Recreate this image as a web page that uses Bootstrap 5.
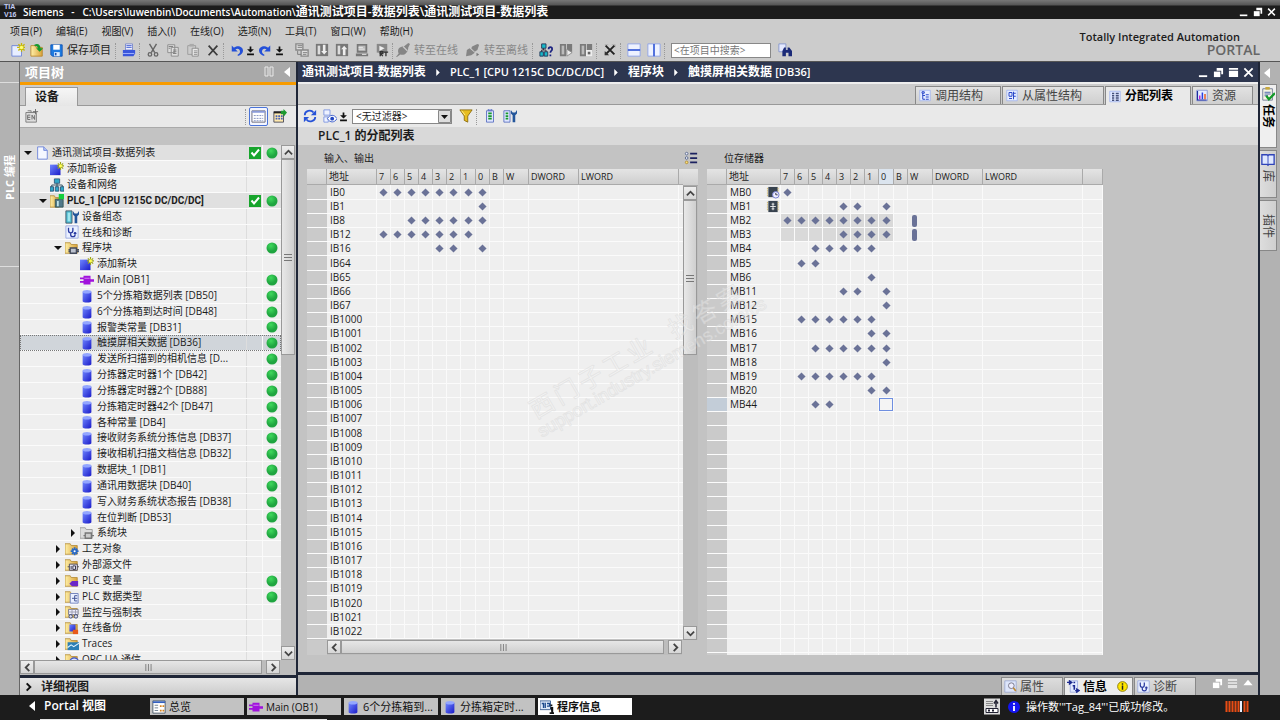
<!DOCTYPE html>
<html lang="zh-CN">
<head>
<meta charset="utf-8">
<meta name="viewport" content="width=device-width, initial-scale=1">
<title>Siemens - 通讯测试项目-数据列表</title>
<link href="https://cdn.jsdelivr.net/npm/bootstrap@5.3.0/dist/css/bootstrap.min.css" rel="stylesheet">
<style>
:root{--ink:#1c1c1c;--chrome:#ccc;--mid:#c3c3c3;--strip:#b2b2b2;--navy:#2d364f;--bit:#6a7297}
body{font:10px/14px "Open Sans","Noto Sans CJK SC",sans-serif;color:var(--ink);background:var(--mid);overflow:hidden}
button,input,select{font:inherit;color:inherit;border:0;background:none;padding:0;margin:0}
button{display:inline-flex;align-items:center;white-space:nowrap}
a{color:inherit;text-decoration:none}
svg{display:block;flex:none}
.ic{width:14px;height:14px}
.t10{font-size:10px}.t11{font-size:11px}.t12{font-size:12px}.t13{font-size:13px}
.title-bar{height:19px;background:linear-gradient(#777 0,#555 5px,#1c1c1c 6px);color:#fff;padding:0 4px}
.title-text{white-space:pre}
.logo{font:700 7px/8px "Liberation Sans",sans-serif;color:#c3cdf4;width:19px}
.app-head{height:43px;background:var(--chrome);border-bottom:1px solid #555}
.menu-bar{height:21px;padding:5px 10px 0;gap:14px}
.menu-bar a{white-space:nowrap}
.tool-bar{height:20px;padding-left:8px}
.tb{width:20px;height:18px;justify-content:center}
.tb.slim{width:9px}
.tb.first{width:19px}
.sep{width:4px;height:16px;border-left:1px dotted #999;margin-top:1px}
.off{color:#888}
.search-box{width:100px;height:15px;background:#fff;border:1px solid #888;padding:0 2px;margin-left:3px}
.search-box::placeholder{color:#777;opacity:1}
.brand{right:20px;top:30px;text-align:right;line-height:13px}
.brand .portal{font-size:14px;color:#666}
.brand .name-line{padding-right:20px}
.side-strip{width:20px;background:var(--strip)}
.vtext{writing-mode:vertical-rl;text-orientation:sideways}
.left-strip{border-right:1px solid #666}
.left-strip .cap{height:21px;border-bottom:1px solid #ddd}
.left-strip .mid{height:184px;border-bottom:1px solid #ddd;color:#fff}
.left-strip .mid span{transform:rotate(180deg);margin-bottom:66px}
.tree-pane{width:276px;background:var(--mid)}
.pane-title{height:20px;background:#a9a9a9;color:#fff;padding:0 5px}
.orange{height:3px;background:#f79b00}
.dev-tabs{height:21px;background:var(--chrome);border-bottom:1px solid #999;padding:2px 5px 0}
.dev-tabs button{height:19px;width:53px;background:linear-gradient(#f6f6f6,#e6e6e6);border:1px solid #999;border-bottom:0;margin-bottom:-1px;padding-left:9px}
.pane-tools{height:23px;background:#e9e9e9;border-bottom:1px solid #aaa;padding:0 9px 0 5px}
.list-btn{border:1px solid #4a73d8;background:#f4f6ff;border-radius:2px;padding:1px;margin-right:5px}
.gap-band{height:17px}
.tree-row{height:16px;border-bottom:1px solid #fbfbfb;background:#efefef}
.tree-row:nth-child(6n){height:15px}
.tree-row.head{background:#e0e0e0}
.tree-row.sel{background:#d0d5da;outline:1px dotted #777;outline-offset:-1px}
.tree-row .tog{width:15px;justify-content:center}
.tree-row .label-text{margin-left:3px}
.tree-row .strong-text{font-family:Roboto,"Noto Sans CJK SC",sans-serif;font-weight:700}
.tree-row .name{width:227px;border-right:1px solid #ddd;overflow:hidden;white-space:nowrap;line-height:15px}
.tree-row .chk{width:16px;border-right:1px solid #fafafa}
.tree-row .dot{width:17px}
.lv-1{padding-left:15px}.lv-2{padding-left:30px}.lv-3{padding-left:45px}
.vs{width:15px;background:#bdbdbd}
.vs button,.hs button{width:14px;height:14px;background:linear-gradient(#eee,#d6d6d6);border:1px solid #999;justify-content:center;color:#444;flex:none}
.vs .top-cell{height:17px;background:linear-gradient(#e4e4e4,#cfcfcf);border-bottom:1px solid #aaa}
.thumb-v{width:14px;background:linear-gradient(90deg,#e8e8e8,#cfcfcf);border:1px solid #999}
.hs{height:15px;background:#bdbdbd}
.thumb-h{height:14px;background:linear-gradient(#e6e6e6,#cfcfcf);border:1px solid #999}
.detail{height:20px;background:linear-gradient(#e6e6e6,#ccc);border-top:3px solid #1f2637}
.edge{width:2px;background:#1f2637}
.doc-title{height:20px;background:var(--navy);color:#fff;padding:0 4px;gap:8px;white-space:nowrap}
.doc-tabs{height:23px;background:var(--chrome);border-top:2px solid #eee;border-bottom:1px solid #999;padding-right:4px}
.doc-tabs button{height:18px;width:86px;border:1px solid #888;border-bottom:0;background:linear-gradient(#e2e2e2,#cfcfcf);padding-left:3px;gap:4px;color:#444;margin-right:1px}
.doc-tabs button.wide{width:102px}
.doc-tabs button.short{width:61px}
.doc-tabs button.on{background:#e9e9e9;color:#000;height:19px;margin-bottom:-1px}
.doc-tools{height:22px;background:#e9e9e9;padding-left:2px}
.filter-box{width:100px;height:15px}
.filter-box select{appearance:none;background:#fff;border:1px solid #888;padding-left:3px;line-height:13px}
.filter-box svg{right:1px;top:1px;pointer-events:none}
.doc-sub{height:18px;background:#d9d9d9;padding-left:20px}
.area-head{height:24px;padding:1px 0 0 17px}
.bits{table-layout:fixed;border-collapse:separate;border-spacing:0;line-height:13px}
.bits th{height:16px;font-size:9px;font-weight:400;background:linear-gradient(#e4e4e4,#cfcfcf);border-right:1px solid #aaa;border-bottom:1px solid #aaa;padding:0 2px;overflow:hidden}
.bits th.ad{font-size:10px}
.bits th.cur{background:#dbe4ee}
.bits td{height:14px;padding:0;background:#efefef;border-right:1px solid #fafafa;border-bottom:1px solid #fbfbfb;overflow:hidden;line-height:13px}
.bits tbody tr:nth-child(6n) td{height:15px}
.bits tbody tr:first-child td{height:15px}
.bits td.gut{background:#cacaca;border-right:0}
.bits td.gut.cur{background:#c3cdd8}
.bits td.ad{padding-left:3px;border-right-color:#fbfbfb}
.bits td.use{background:#d9d9d9}
.bits td.pick{box-shadow:inset 0 0 0 1px #6f8fe0;background:#f4f4f4}
.bits td.bitc svg{margin:auto}
.bits .pill{width:5px;height:12px;background:var(--bit);margin-left:4px;border-radius:2px}
.c20{width:20px}.c14{width:14px}.c15{width:15px}.c25{width:25px}.c50{width:50px}.c54{width:54px}.c100{width:100px}.c5{width:5px}
.grid-l{width:391px;margin-left:9px}
.grid-r{width:396px;margin-left:9px}
.view-l{width:377px;height:471px}
.body-r{width:396px;height:486px}
.insp{height:23px;background:var(--strip);border-top:3px solid #1f2637}
.insp button.tabx{height:18px;width:62px;border:1px solid #888;border-bottom:0;background:linear-gradient(#ddd,#c9c9c9);color:#444;gap:3px;padding-left:2px;margin-top:2px}
.insp button.tabx.on{background:#ececec;color:#000;width:69px;margin:2px 1px 0}
.right-strip{padding-top:22px;position:relative}
.right-strip .vtab{width:17px;border:1px solid #888;border-left:0;background:linear-gradient(90deg,#ddd,#cfcfcf);flex-direction:column;gap:3px;padding-top:2px;color:#444;margin-bottom:2px}
.right-strip .vtab.on{background:#efefef;color:#000}
.right-strip .col-arrow{height:22px;top:0;left:3px}
.foot{height:25px;background:#1c1c1c;color:#fff}
.portal-link{padding-left:28px;width:150px}
.task{width:94px;height:17px;background:#c2c2c2;color:#111;padding-left:2px;gap:3px;margin-right:3px;margin-top:3px}
.task.on{background:#fff}
.status{margin-top:3px}
.status .info-mark{margin:0 6px 0 8px}
.activity{margin-right:31px}
.msg{width:199px}
.foot-line{height:1px;width:287px;margin-left:40px;background:#e4e4e4}
.wm{left:515px;top:333px;transform:rotate(-30deg);pointer-events:none;z-index:3;color:rgba(255,255,255,.35);-webkit-text-stroke:1px rgba(208,208,208,.4);white-space:nowrap}
.wm .zh{font:24px/26px "Noto Sans CJK SC",sans-serif;gap:4px;padding-left:4px}
.wm .gap-before{margin-left:20px}
.wm .url{font:18px/20px "Liberation Sans",sans-serif}
</style>
</head>
<body class="d-flex flex-column vh-100">

<svg width="0" height="0" class="position-absolute" aria-hidden="true">
<defs>
<linearGradient id="gb" x1="0" x2="1" y1="0" y2="1"><stop offset="0" stop-color="#6f86ff"/><stop offset="1" stop-color="#1a1ac8"/></linearGradient>
<linearGradient id="gy" x1="0" x2="1"><stop offset="0" stop-color="#fff0a8"/><stop offset="1" stop-color="#d9a23a"/></linearGradient>
<radialGradient id="gg" cx=".4" cy=".3"><stop offset="0" stop-color="#3fd95c"/><stop offset="1" stop-color="#1fa540"/></radialGradient>
<symbol id="page" viewBox="0 0 16 16"><path d="M3 1h7l4 4v10H3z" fill="#f4f7ff" stroke="#6a82d8"/><path d="M10 1v4h4" fill="#b9c7f5" stroke="#6a82d8"/></symbol>
<symbol id="newprj" viewBox="0 0 16 16"><path d="M1 3h8l3 3v9H1z" fill="#e8eeff" stroke="#6a82d8"/><path d="M12 0v10M7 5h10M8.500 1.500l7 7M15.500 1.500l-7 7" stroke="#c8b800" stroke-width="1.500"/><circle cx="12" cy="5" r="2" fill="#ffff70"/></symbol>
<symbol id="open" viewBox="0 0 16 16"><path d="M1 3h5l1 2h7v10H1z" fill="url(#gy)" stroke="#b8862a"/><path d="M5 2c4-2 7 0 7 4h3l-4 4-4-4h2c0-2-1-3-4-3z" fill="#159a2c"/></symbol>
<symbol id="save" viewBox="0 0 16 16"><path d="M1 1h14v14H3l-2-2z" fill="#1e7be0" stroke="#0a4db0"/><path d="M4 1h8v6H4z" fill="#fff"/><path d="M5 10h7v5H5z" fill="#d9ecff"/><path d="M6 11h2v3H6z" fill="#1e4fb0"/></symbol>
<symbol id="print" viewBox="0 0 16 16"><path d="M4 1h8v7H4z" fill="#eef" stroke="#7787c8"/><path d="M5 3h6M5 5h6" stroke="#3355cc"/><path d="M1 8h14v4l-2 3H1z" fill="#3a57dc"/><path d="M1 12h13" stroke="#a9b8ff"/></symbol>
<symbol id="cut" viewBox="0 0 16 16"><path d="M4 1l6 10M12 1L6 11" stroke="#666" stroke-width="1.600"/><circle cx="4.500" cy="13" r="2" fill="none" stroke="#666" stroke-width="1.500"/><circle cx="11.500" cy="13" r="2" fill="none" stroke="#666" stroke-width="1.500"/></symbol>
<symbol id="copy" viewBox="0 0 16 16"><path d="M2 2h8v9H2zM6 5h8v10H6z" fill="#ddd" stroke="#888"/><path d="M8 8h4M8 10h4M8 12h4M3 4h5M3 6h2" stroke="#777"/></symbol>
<symbol id="paste" viewBox="0 0 16 16"><path d="M2 3h9v10H2z" fill="#ccc" stroke="#999"/><path d="M4 1h5v3H4z" fill="#aaa"/><path d="M7 6h7v9H7z" fill="#e8e8e8" stroke="#888"/><path d="M9 9h4M9 11h4M9 13h4" stroke="#888"/></symbol>
<symbol id="del" viewBox="0 0 16 16"><path d="M3 3l10 11M13 3L3 14" stroke="#3c3c3c" stroke-width="2"/></symbol>
<symbol id="undo" viewBox="0 0 16 16"><path d="M1 2v8h8L6 7c3-2 6 0 6 3 0 2-1 3-3 4v2c4-1 7-4 7-7 0-6-8-8-12-4z" fill="#2450d8"/></symbol>
<symbol id="redo" viewBox="0 0 16 16"><path d="M15 2v8H7l3-3C7 5 4 7 4 10c0 2 1 3 3 4v2c-4-1-7-4-7-7 0-6 8-8 12-4z" fill="#2450d8"/></symbol>
<symbol id="drop" viewBox="0 0 8 14"><path d="M3 3h2v3h3L4 10 0 6h3zM0 11h8v2H0z" fill="#111"/></symbol>
<symbol id="gcomp" viewBox="0 0 16 16"><path d="M1 1h8v7H1zM7 8h8v7H7z" fill="#ddd" stroke="#888" stroke-width="1.500"/><path d="M3 3h5M3 5h5M9 11h5M9 13h4M3 9v4h4" stroke="#777" fill="none"/></symbol>
<symbol id="gdown" viewBox="0 0 16 16"><path d="M1 1h14v14H1z" fill="#777"/><path d="M3 3h3v10H3z" fill="#ddd"/><path d="M9 2h3v7h2l-3.500 4L7 9h2z" fill="#eee"/></symbol>
<symbol id="gup" viewBox="0 0 16 16"><path d="M1 1h14v14H1z" fill="#777"/><path d="M3 3h3v10H3z" fill="#ddd"/><path d="M9 14h3V7h2l-3.500-4L7 7h2z" fill="#eee"/></symbol>
<symbol id="gsim" viewBox="0 0 16 16"><path d="M2 1h12v10H2zM1 12h14v3H1z" fill="#777"/><path d="M4 3h8v6H4z" fill="#bbb"/><path d="M4 5h5M4 7h7M8 13h5" stroke="#eee"/></symbol>
<symbol id="grt" viewBox="0 0 16 16"><path d="M2 1h12v10H2z" fill="#888"/><path d="M5 3l6 3-6 3z" fill="#eee"/><path d="M6 15v-5h3v2H6l3 3M10 10.500h5M12.500 10v5" stroke="#333" fill="none" stroke-width="1.500"/></symbol>
<symbol id="plug" viewBox="0 0 16 16"><path d="M0 16l3-4c-2-5 1-8 6-8l5-4 2 1-2 4c0 6-5 10-9 8l-4 3z" fill="#858585"/><path d="M8 4l5 5" stroke="#ccc" stroke-width="1.500"/></symbol>
<symbol id="unplug" viewBox="0 0 16 16"><path d="M7 4l6-3 2 1-2 6-3 2-4-4zM0 15l1-7 3-2 6 5-4 3z" fill="#858585"/><path d="M12 11v4l3-2z" fill="#777"/></symbol>
<symbol id="diagq" viewBox="0 0 16 16"><path d="M3 1h5v5H3zM1 10h4v5H1zM6 10h4v5H6z" fill="#18b8c8" stroke="#235"/><path d="M5 6v2M3 10V8h5v2" stroke="#223" fill="none"/><path d="M11 7c0-3 4-3 4 0 0 2-2 2-2 4M13 13v2" stroke="#1c2380" stroke-width="2" fill="none"/></symbol>
<symbol id="gstart" viewBox="0 0 16 16"><path d="M1 1h7v14H1zM9 1h6v9H9z" fill="#7a7a7a"/><path d="M3 3h3v10H3z" fill="#bbb"/><path d="M9 7l6 4-6 4z" fill="#eee" stroke="#888"/></symbol>
<symbol id="gstop" viewBox="0 0 16 16"><path d="M1 1h7v14H1zM9 1h6v9H9z" fill="#7a7a7a"/><path d="M3 3h3v10H3z" fill="#bbb"/><path d="M8 8h7v7H8z" fill="#eee"/><path d="M10 10h3v3h-3z" fill="#666"/></symbol>
<symbol id="xref" viewBox="0 0 16 16"><path d="M2 2h4M10 2h4v3M2 14v-3" stroke="#aaa" fill="none"/><path d="M3 3l10 10M13 3L3 13" stroke="#222" stroke-width="2.200"/><path d="M2 9v5h5z" fill="#333"/></symbol>
<symbol id="splith" viewBox="0 0 16 16"><path d="M1 1h14v14H1z" fill="#eef2ff" stroke="#8ba0e8"/><path d="M1 8h14" stroke="#3d5fd8" stroke-width="2"/></symbol>
<symbol id="splitv" viewBox="0 0 16 16"><path d="M1 1h14v14H1z" fill="#eef2ff" stroke="#8ba0e8"/><path d="M8 1v14" stroke="#3d5fd8" stroke-width="2"/></symbol>
<symbol id="find" viewBox="0 0 16 16"><path d="M1 1h8v9H1z" fill="#e4e9ff" stroke="#8492cc"/><path d="M5 15V9l2-4h2v3h2V5h2l3 4v6h-4v-4H9v4z" fill="#1b2a78"/></symbol>
<symbol id="addblk" viewBox="0 0 16 16"><path d="M0 3h12v12H0z" fill="url(#gb)"/><path d="M12 0v9M8 4.500h8M9 1.500l6 6M15 1.500l-6 6" stroke="#9da51a" stroke-width="1.300"/><circle cx="12" cy="4.500" r="1.800" fill="#ffff55"/></symbol>
<symbol id="net" viewBox="0 0 16 16"><path d="M5 1h6v5H5zM0 10h4v5H0zM6 10h4v5H6zM12 10h4v5h-4z" fill="#31a7c8" stroke="#2a5578"/><path d="M8 6v4M2 10V8h12v2" stroke="#245" fill="none"/></symbol>
<symbol id="plc" viewBox="0 0 16 16"><path d="M0 2h5l1 2h4v11H0z" fill="url(#gy)" stroke="#b8913f"/><path d="M6 6h9v9H6z" fill="#50788a" stroke="#355"/><path d="M8 8h2v6H8z" fill="#bfe3e8"/><path d="M10 0h6v6h-6z" fill="#13cf3c"/></symbol>
<symbol id="devcfg" viewBox="0 0 16 16"><path d="M1 1h7v14H1z" fill="#4bb9d0" stroke="#456"/><path d="M3 3h3v10H3z" fill="#9fe6ee"/><path d="M9 1v4l2 2v8h3V7l2-2V1l-2 3h-3z" fill="#24569a"/></symbol>
<symbol id="diag" viewBox="0 0 16 16"><path d="M1 1h14v14H1z" fill="#eaf0ff" stroke="#98a8e0"/><path d="M4 3v3c0 4 5 4 5 0V3M6.500 9v2c0 3 5 3 5 0" stroke="#2a3aa0" stroke-width="1.500" fill="none"/><circle cx="11.500" cy="9.500" r="1.500" fill="#2a3aa0"/></symbol>
<symbol id="fold" viewBox="0 0 16 16"><path d="M0 2h6l1 2h7v10H0z" fill="url(#gy)" stroke="#b8913f"/></symbol>
<symbol id="fblk" viewBox="0 0 16 16"><use href="#fold"/><path d="M6 8h7v6H6zM4 10h2M4 12h2M13 10h3M13 12h3" fill="#bcc2cf" stroke="#444b5c" stroke-width="1.500"/></symbol>
<symbol id="fsys" viewBox="0 0 16 16"><path d="M0 2h6l1 2h7v10H0z" fill="#ddd" stroke="#999"/><path d="M6 8h7v6H6zM4 11h2M13 11h3" fill="#ccc" stroke="#777" stroke-width="1.500"/></symbol>
<symbol id="ftech" viewBox="0 0 16 16"><use href="#fold"/><path d="M11 6v9M6.500 10.500h9M8 7.500l6 6M14 7.500l-6 6" stroke="#2668c8" stroke-width="2"/><circle cx="11" cy="10.500" r="1.200" fill="#fff"/></symbol>
<symbol id="fext" viewBox="0 0 16 16"><use href="#fold"/><path d="M5 7h9v7H5zM3 10h2M14 10h2" fill="#eef" stroke="#445"/><path d="M7 9v4M9 9h3v4H9z" stroke="#223" fill="none"/></symbol>
<symbol id="fvar" viewBox="0 0 16 16"><use href="#fold"/><path d="M5 11l3-3h7v6H8z" fill="#6a26c8"/></symbol>
<symbol id="ftype" viewBox="0 0 16 16"><use href="#fold"/><path d="M6 4h9v11H6z" fill="#eaf0ff" stroke="#6b7fc0"/><path d="M8 9.500h3M14 6.500h-3v6h3M11 9.500h3" stroke="#34468c" fill="none"/></symbol>
<symbol id="fwatch" viewBox="0 0 16 16"><use href="#fold"/><path d="M4 5h11v6H4z" fill="#eef" stroke="#778"/><path d="M4 8h11M8 5v6M12 5v6" stroke="#99a"/><circle cx="6.500" cy="13" r="2" fill="#dde" stroke="#347"/><circle cx="12.500" cy="13" r="2" fill="#dde" stroke="#347"/></symbol>
<symbol id="fback" viewBox="0 0 16 16"><use href="#fold"/><path d="M5 4h7v8H5z" fill="url(#gb)"/><path d="M9 10h6v5H9z" fill="#e85a1c"/></symbol>
<symbol id="ftrace" viewBox="0 0 16 16"><use href="#fold"/><path d="M3 6h13v9H3z" fill="#2c7fb5"/><path d="M3 12l4-3 3 2 6-4" stroke="#dff4ff" fill="none" stroke-width="1.300"/></symbol>
<symbol id="fopc" viewBox="0 0 16 16"><use href="#fold"/><circle cx="10.500" cy="10.500" r="5" fill="#dce4ff" stroke="#3b55c8" stroke-width="1.500"/><path d="M8 11l2.500-3 2.500 3" stroke="#3b55c8" fill="none"/></symbol>
<symbol id="ob" viewBox="0 0 16 16"><path d="M4 3h8v10H4zM0 5h4v2H0zM0 9h4v2H0zM12 7h4v3h-4z" fill="#a012dc"/><path d="M5 6h6" stroke="#d68cf5"/></symbol>
<symbol id="db" viewBox="0 0 16 16"><path d="M3 3v11c0 2 10 2 10 0V3z" fill="url(#gb)"/><ellipse cx="8" cy="3" rx="5" ry="2" fill="#93a6ff"/></symbol>
<symbol id="ok" viewBox="0 0 12 12"><path d="M0 0h12v12H0z" fill="#17a52c"/><path d="M2.500 5.500l2.500 3 5-6" stroke="#fff" stroke-width="2" fill="none"/></symbol>
<symbol id="run" viewBox="0 0 12 12"><circle cx="6" cy="6" r="5.500" fill="url(#gg)"/></symbol>
<symbol id="tri-d" viewBox="0 0 8 8"><path d="M0 2h8L4 6z" fill="#111"/></symbol>
<symbol id="tri-r" viewBox="0 0 8 8"><path d="M2 0l4 4-4 4z" fill="#111"/></symbol>
<symbol id="tri-l" viewBox="0 0 8 10"><path d="M7 0v10L1 5z" fill="#fff"/></symbol>
<symbol id="tri-w" viewBox="0 0 8 8"><path d="M2 0l4 4-4 4z" fill="#fff"/></symbol>
<symbol id="up" viewBox="0 0 10 10"><path d="M1 7l4-4 4 4" stroke="#444" stroke-width="2" fill="none"/></symbol>
<symbol id="dn" viewBox="0 0 10 10"><path d="M1 3l4 4 4-4" stroke="#444" stroke-width="2" fill="none"/></symbol>
<symbol id="lf" viewBox="0 0 10 10"><path d="M7 1L3 5l4 4" stroke="#444" stroke-width="2" fill="none"/></symbol>
<symbol id="rt" viewBox="0 0 10 10"><path d="M3 1l4 4-4 4" stroke="#444" stroke-width="2" fill="none"/></symbol>
<symbol id="rt-b" viewBox="0 0 10 10"><path d="M3 1l4 4-4 4" stroke="#111" stroke-width="2.200" fill="none"/></symbol>
<symbol id="grip-v" viewBox="0 0 8 8"><path d="M0 1.500h8M0 4.500h8M0 7.500h8" stroke="#777"/></symbol>
<symbol id="grip-h" viewBox="0 0 8 8"><path d="M1.500 0v8M4.500 0v8M7.500 0v8" stroke="#777"/></symbol>
<symbol id="bit" viewBox="0 0 10 10"><path d="M5 .5L9.500 5 5 9.500.5 5z" fill="#6a7297"/></symbol>
<symbol id="clk" viewBox="0 0 14 14"><path d="M2 1h10v11H2z" fill="#38434f"/><path d="M1 2v10M12.500 2v10" stroke="#c3a23e" stroke-dasharray="1 1"/><circle cx="10" cy="9.500" r="3.500" fill="#eef" stroke="#7078d0"/><path d="M10 7.500v2h2" stroke="#334" fill="none"/></symbol>
<symbol id="sysb" viewBox="0 0 14 14"><path d="M2 1h10v12H2z" fill="#38434f"/><path d="M1 2v10M12.500 2v10" stroke="#c3a23e" stroke-dasharray="1 1"/><path d="M7 3v8M4 7h6M5.500 4.500h3M5.500 9.500h3" stroke="#eee"/></symbol>
<symbol id="refresh" viewBox="0 0 16 16"><path d="M2 7c0-5 7-7 10-3M14 9c0 5-7 7-10 3" stroke="#2753d8" stroke-width="2" fill="none"/><path d="M15 1v6H9zM1 15V9h6z" fill="#2753d8"/></symbol>
<symbol id="viewopt" viewBox="0 0 16 16"><path d="M1 1h7v6H1zM1 9h5v6H1z" fill="#eef2ff" stroke="#7c93e0"/><path d="M5 11c3-5 8-5 11 0-3 5-8 5-11 0z" fill="#fff" stroke="#2c50c8"/><circle cx="10.500" cy="11" r="2.200" fill="#1f45c0"/></symbol>
<symbol id="funnel" viewBox="0 0 16 16"><path d="M1 1h14l-5 7v7l-4-2V8z" fill="#e8bd1e" stroke="#8a6a10"/><path d="M3 2l4 5" stroke="#fff3a0"/></symbol>
<symbol id="bytes" viewBox="0 0 16 16"><path d="M4 2h8v13H4zM6 0h4v2H6z" fill="#dfe6ff" stroke="#5a6fc0"/><path d="M6 5h4M6 8h4M6 11h4" stroke="#189a2c" stroke-width="2"/></symbol>
<symbol id="bytew" viewBox="0 0 16 16"><path d="M1 2h7v13H1z" fill="#dfe6ff" stroke="#5a6fc0"/><path d="M3 5h3M3 8h3M3 11h3" stroke="#189a2c" stroke-width="2"/><path d="M9 1v4l2 2v8h3V7l2-2V1l-2 3h-3z" fill="#24569a"/></symbol>
<symbol id="struct" viewBox="0 0 16 16"><path d="M1 1h14v14H1z" fill="#e6edff" stroke="#9eb0ee"/><path d="M4 3h3v2H4zM5 5v8h3M5 8h3M9 7h4M9 10h4M9 13h4" stroke="#2745c8" stroke-width="1.300" fill="none"/></symbol>
<symbol id="depst" viewBox="0 0 16 16"><path d="M1 1h14v14H1z" fill="#e6edff" stroke="#9eb0ee"/><path d="M4 4h4v5H4zM10 3v10M4 12h4M10 5h3M10 9h3" stroke="#2745c8" stroke-width="1.300" fill="none"/></symbol>
<symbol id="alloc" viewBox="0 0 16 16"><path d="M1 1h14v14H1z" fill="#dfe7ff" stroke="#9eb0ee"/><path d="M4 4h3M9 4h4M4 7h3M9 7h4M4 10h3M9 10h4M4 13h3M9 13h4" stroke="#444f7a" stroke-width="2"/></symbol>
<symbol id="res" viewBox="0 0 16 16"><path d="M1 1h14v14H1z" fill="#e6edff" stroke="#7787c8"/><path d="M2 2v12h12" stroke="#1c2ca0" stroke-width="1.500" fill="none"/><path d="M5 13V8" stroke="#c026d0" stroke-width="2"/><path d="M8.500 13V4" stroke="#2840e0" stroke-width="2"/><path d="M12 13V6" stroke="#e86020" stroke-width="2"/></symbol>
<symbol id="wmin" viewBox="0 0 12 12"><path d="M1 9h9v2H1z" fill="#fff"/></symbol>
<symbol id="wres" viewBox="0 0 12 12"><path d="M4 1h7v7H9V4H4z" fill="#fff"/><path d="M1 5h7v6H1z" fill="#fff"/></symbol>
<symbol id="wmax" viewBox="0 0 12 12"><path d="M1 1h10v2H1zM1 4h10v7H1z" fill="#fff"/></symbol>
<symbol id="wlist" viewBox="0 0 12 12"><path d="M1 1h10v10H1z" fill="#e4e4e4"/><path d="M1 4h10M1 7h10" stroke="#a0a0a0"/></symbol>
<symbol id="wx" viewBox="0 0 12 12"><path d="M1.500 1.500l9 9M10.500 1.500l-9 9" stroke="#fff" stroke-width="2"/></symbol>
<symbol id="wtri" viewBox="0 0 12 12"><path d="M6 2l5 6H1z" fill="#fff"/></symbol>
<symbol id="cols" viewBox="0 0 12 12"><path d="M2 1h3v9H2zM7 1h3v9H7z" fill="none" stroke="#e8e8e8"/></symbol>
<symbol id="gprop" viewBox="0 0 16 16"><path d="M1 4h12v11H1zM3 2h4v2" fill="#ddd" stroke="#777"/><path d="M3 7h3M3 9.500h3M3 12h3M3 7v5M8 7v5M11 7v5M8 7l3 5M12 0v6M9 3h6" stroke="#666"/></symbol>
<symbol id="tbl" viewBox="0 0 16 16"><path d="M1 2h14v12H1z" fill="#fff" stroke="#667"/><path d="M1 3h14" stroke="#8b9bd8" stroke-width="2"/><path d="M3 7h10M3 10h10M3 12.500h10" stroke="#8190c0" stroke-dasharray="2 1"/></symbol>
<symbol id="tblgo" viewBox="0 0 16 16"><path d="M1 3h11v12H1z" fill="#ffe9ad" stroke="#445"/><path d="M1 4h11" stroke="#222" stroke-width="2"/><path d="M3 8h8M3 11h8" stroke="#4560b8" stroke-width="2" stroke-dasharray="2 1"/><path d="M9 2h3V0l4 4-4 5V6H9z" fill="#1d9a30"/></symbol>
<symbol id="lst" viewBox="0 0 16 16"><path d="M7 3h8M7 8h8M7 13h8" stroke="#1c2260" stroke-width="2"/><circle cx="3" cy="3" r="1.500" fill="#eef" stroke="#568"/><circle cx="3" cy="8" r="1.500" fill="#eef" stroke="#568"/><circle cx="3" cy="13" r="1.500" fill="#ffe27a" stroke="#a83"/></symbol>
<symbol id="task" viewBox="0 0 16 16"><path d="M2 2h11v13H2z" fill="#f6f6e4" stroke="#6a7590"/><path d="M5 0h5v3H5z" fill="#c8a83c"/><path d="M4 6h7M4 8h7M4 10h4" stroke="#3955a8"/><path d="M6 10l3 4 7-7" stroke="#149a28" stroke-width="2.500" fill="none"/></symbol>
<symbol id="book" viewBox="0 0 16 16"><path d="M1 2h6l1 1 1-1h6v11H9l-1 1-1-1H1z" fill="#dfe8ff" stroke="#2f43b8" stroke-width="1.500"/><path d="M8 3v10" stroke="#2f43b8"/></symbol>
<symbol id="insp-p" viewBox="0 0 16 16"><path d="M1 1h14v14H1z" fill="#dde5fa" stroke="#9aa8d0"/><circle cx="9" cy="7" r="3.500" fill="#eef" stroke="#667"/><path d="M11.500 9.500l3 4" stroke="#c08a30" stroke-width="2"/></symbol>
<symbol id="insp-i" viewBox="0 0 16 16"><path d="M4 1h9v14H4z" fill="#e2eaff" stroke="#98a8e0"/><path d="M0 3h4M3 1l3 2-3 2zM10 13h5M12 11l3 2-3 2z" stroke="#1c2a90" stroke-width="1.500" fill="#1c2a90"/><path d="M8 3h2M7 7h2v5" stroke="#1c2a90" stroke-width="2" fill="none"/></symbol>
<symbol id="warn" viewBox="0 0 12 12"><circle cx="6" cy="6" r="5.300" fill="#ffe600" stroke="#8a7a00"/><path d="M6 2.500v1.500M6 5v4.500" stroke="#222" stroke-width="1.600"/></symbol>
<symbol id="inf" viewBox="0 0 12 12"><circle cx="6" cy="6" r="6" fill="#1414f0"/><path d="M6 2v1.700M6 5v5" stroke="#fff" stroke-width="1.800"/></symbol>
<symbol id="over" viewBox="0 0 16 16"><path d="M1 1h14v14H1z" fill="#fff" stroke="#456"/><path d="M1 2.500h14" stroke="#3360c0" stroke-width="2"/><path d="M3 6h4M3 9h4M3 12h4" stroke="#678"/><path d="M9 6h2v2H9zM12 6h2v2h-2zM9 11h2v2H9zM12 11h2v2h-2z" fill="#d88420"/></symbol>
<symbol id="pinfo" viewBox="0 0 16 16"><path d="M0 1h12v10H0z" fill="#dce8f8" stroke="#35588c"/><path d="M2 4h2v5M6 3v6M8 4h3v3H8" stroke="#1c4a8c" stroke-width="1.500" fill="none"/><path d="M13 5v2M12 9h2v6M11 15h5" stroke="#111" stroke-width="2.200"/></symbol>
<symbol id="stat" viewBox="0 0 16 16"><path d="M0 0h16v16H0z" fill="#ddd"/><path d="M2 3h7M2 5h7M2 7h7" stroke="#888"/><path d="M2 10h12v4H2z" fill="#fff" stroke="#223"/><path d="M4 12h2M8 12h2" stroke="#223" stroke-width="2"/><path d="M12 9V4M10 5l2-3 2 3" stroke="#223" stroke-width="1.500" fill="none"/></symbol>
</defs>
</svg>

<header>
  <div class="title-bar d-flex align-items-end">
    <div class="logo"><div>TIA</div><div>V16</div></div>
    <span class="t12 fw-semibold title-text"><span class="t10">Siemens   -   C:\Users\luwenbin\Documents\Automation\</span>通讯测试项目-数据列表\通讯测试项目-数据列表</span>
    <div class="ms-auto d-flex align-self-center gap-1 mt-1">
      <button aria-label="最小化"><svg width="10" height="10"><use href="#wmin"/></svg></button>
      <button aria-label="还原"><svg width="10" height="10"><use href="#wres"/></svg></button>
      <button aria-label="关闭"><svg width="9" height="10"><use href="#wx"/></svg></button>
    </div>
  </div>
  <div class="app-head">
    <nav class="menu-bar d-flex" id="menu"></nav>
    <div class="tool-bar d-flex align-items-center" role="toolbar">
      <button class="tb first" aria-label="新建"><svg class="ic"><use href="#newprj"/></svg></button>
      <button class="tb first" aria-label="打开"><svg class="ic"><use href="#open"/></svg></button>
      <button class="t11 gap-1 ms-1"><svg width="13" height="13"><use href="#save"/></svg>保存项目</button>
      <i class="sep ms-1"></i>
      <button class="tb" aria-label="打印"><svg class="ic"><use href="#print"/></svg></button>
      <i class="sep"></i>
      <button class="tb" aria-label="剪切"><svg class="ic"><use href="#cut"/></svg></button>
      <button class="tb" aria-label="复制"><svg class="ic"><use href="#copy"/></svg></button>
      <button class="tb" aria-label="粘贴"><svg class="ic"><use href="#paste"/></svg></button>
      <button class="tb" aria-label="删除"><svg class="ic"><use href="#del"/></svg></button>
      <i class="sep"></i>
      <button class="tb first" aria-label="撤销"><svg width="12" height="12"><use href="#undo"/></svg></button>
      <button class="tb slim" aria-label="撤销列表"><svg width="7" height="12"><use href="#drop"/></svg></button>
      <button class="tb" aria-label="重做"><svg width="12" height="12"><use href="#redo"/></svg></button>
      <button class="tb slim me-2" aria-label="重做列表"><svg width="7" height="12"><use href="#drop"/></svg></button>
      <button class="tb" aria-label="编译"><svg class="ic"><use href="#gcomp"/></svg></button>
      <button class="tb" aria-label="下载"><svg class="ic"><use href="#gdown"/></svg></button>
      <button class="tb" aria-label="上传"><svg class="ic"><use href="#gup"/></svg></button>
      <button class="tb" aria-label="仿真"><svg class="ic"><use href="#gsim"/></svg></button>
      <button class="tb" aria-label="运行系统"><svg class="ic"><use href="#grt"/></svg></button>
      <i class="sep"></i>
      <button class="t11 off gap-1"><svg class="ic"><use href="#plug"/></svg>转至在线</button>
      <button class="t11 off gap-1 ms-2"><svg class="ic"><use href="#unplug"/></svg>转至离线</button>
      <i class="sep ms-1"></i>
      <button class="tb" aria-label="可访问的设备"><svg class="ic"><use href="#diagq"/></svg></button>
      <button class="tb" aria-label="启动 CPU"><svg class="ic"><use href="#gstart"/></svg></button>
      <button class="tb" aria-label="停止 CPU"><svg class="ic"><use href="#gstop"/></svg></button>
      <i class="sep"></i>
      <button class="tb" aria-label="交叉引用"><svg class="ic"><use href="#xref"/></svg></button>
      <i class="sep"></i>
      <button class="tb" aria-label="水平拆分"><svg class="ic"><use href="#splith"/></svg></button>
      <button class="tb" aria-label="垂直拆分"><svg class="ic"><use href="#splitv"/></svg></button>
      <i class="sep"></i>
      <input class="search-box" type="text" aria-label="在项目中搜索" placeholder="&lt;在项目中搜索&gt;">
      <button class="tb ms-1" aria-label="搜索"><svg class="ic"><use href="#find"/></svg></button>
    </div>
    <div class="brand position-absolute">
      <div class="t11 fw-semibold name-line">Totally Integrated Automation</div>
      <div class="portal fw-semibold">PORTAL</div>
    </div>
  </div>
</header>

<div class="d-flex flex-grow-1 overflow-hidden">
  <aside class="side-strip left-strip flex-shrink-0">
    <div class="cap"></div>
    <div class="mid d-flex justify-content-center align-items-end"><span class="vtext fw-bold t11">PLC 编程</span></div>
  </aside>

  <section class="tree-pane d-flex flex-column flex-shrink-0">
    <div class="pane-title d-flex align-items-center t13 fw-semibold"><span>项目树</span>
      <button class="ms-auto me-2" aria-label="列"><svg width="12" height="12"><use href="#cols"/></svg></button>
      <button aria-label="折叠"><svg width="8" height="10"><use href="#tri-l"/></svg></button></div>
    <div class="orange"></div>
    <div class="dev-tabs d-flex"><button class="t12 fw-bold">设备</button></div>
    <div class="pane-tools d-flex align-items-center">
      <button aria-label="属性"><svg class="ic"><use href="#gprop"/></svg></button>
      <i class="sep ms-auto"></i>
      <button class="list-btn" aria-label="详细列表"><svg width="15" height="15"><use href="#tbl"/></svg></button>
      <button aria-label="转到"><svg class="ic"><use href="#tblgo"/></svg></button>
    </div>
    <div class="gap-band flex-shrink-0"></div>
    <div class="d-flex flex-grow-1 overflow-hidden">
      <div class="flex-grow-1 overflow-hidden" id="tree" role="tree"></div>
      <div class="vs d-flex flex-column">
        <button aria-label="向上"><svg width="9" height="9"><use href="#up"/></svg></button>
        <div class="thumb-v d-flex align-items-center justify-content-center" style="height:38%"><svg width="8" height="8"><use href="#grip-v"/></svg></div>
        <button class="mt-auto" aria-label="向下"><svg width="9" height="9"><use href="#dn"/></svg></button>
      </div>
    </div>
    <div class="hs d-flex flex-shrink-0 pe-3">
      <button aria-label="向左"><svg width="9" height="9"><use href="#lf"/></svg></button>
      <div class="thumb-h flex-grow-1 d-flex align-items-center justify-content-center me-1"><svg width="8" height="7"><use href="#grip-h"/></svg></div>
      <button aria-label="向右"><svg width="9" height="9"><use href="#rt"/></svg></button>
    </div>
    <div class="detail d-flex align-items-center t12 fw-bold flex-shrink-0"><button class="px-1" aria-label="展开"><svg width="9" height="10"><use href="#rt-b"/></svg></button><span class="ms-1">详细视图</span></div>
  </section>
  <div class="edge flex-shrink-0"></div>

  <main class="d-flex flex-column flex-grow-1 overflow-hidden">
    <div class="doc-title d-flex align-items-center t12 fw-semibold flex-shrink-0">
      <span>通讯测试项目-数据列表</span><svg width="8" height="7"><use href="#tri-w"/></svg>
      <span class="t11">PLC_1 [CPU 1215C DC/DC/DC]</span><svg width="8" height="7"><use href="#tri-w"/></svg>
      <span>程序块</span><svg width="8" height="7"><use href="#tri-w"/></svg>
      <span>触摸屏相关数据 <span class="t11">[DB36]</span></span>
      <div class="ms-auto d-flex gap-1">
        <button aria-label="最小化"><svg width="11" height="11"><use href="#wmin"/></svg></button>
        <button aria-label="还原"><svg width="11" height="11"><use href="#wres"/></svg></button>
        <button aria-label="最大化"><svg width="11" height="11"><use href="#wmax"/></svg></button>
        <button aria-label="关闭"><svg width="11" height="11"><use href="#wx"/></svg></button>
      </div>
    </div>
    <div class="doc-tabs d-flex align-items-end justify-content-end t12 flex-shrink-0">
      <button><svg width="12" height="13"><use href="#struct"/></svg>调用结构</button>
      <button class="wide"><svg width="12" height="13"><use href="#depst"/></svg>从属性结构</button>
      <button class="on fw-bold"><svg width="12" height="13"><use href="#alloc"/></svg>分配列表</button>
      <button class="short"><svg width="12" height="13"><use href="#res"/></svg>资源</button>
    </div>
    <div class="doc-tools d-flex align-items-center flex-shrink-0">
      <button class="tb" aria-label="刷新"><svg class="ic"><use href="#refresh"/></svg></button>
      <button class="tb first" aria-label="视图选项"><svg class="ic"><use href="#viewopt"/></svg></button>
      <button class="tb slim me-1" aria-label="视图列表"><svg width="7" height="12"><use href="#drop"/></svg></button>
      <div class="filter-box position-relative"><select class="w-100 h-100 d-block" aria-label="过滤器"><option>&lt;无过滤器&gt;</option></select>
        <svg class="position-absolute" width="13" height="13" viewBox="0 0 13 13"><path d="M.5.5h12v12H.5z" fill="#ddd" stroke="#888"/><path d="M3 5h7L6.500 9z" fill="#111"/></svg></div>
      <button class="tb ms-1" aria-label="过滤"><svg class="ic"><use href="#funnel"/></svg></button>
      <i class="sep"></i>
      <button class="tb" aria-label="显示位"><svg class="ic"><use href="#bytes"/></svg></button>
      <button class="tb" aria-label="设置"><svg class="ic"><use href="#bytew"/></svg></button>
    </div>
    <div class="doc-sub d-flex align-items-center t12 fw-semibold flex-shrink-0">PLC_1 的分配列表</div>
    <div class="d-flex flex-grow-1 overflow-hidden">
      <section class="grid-l flex-shrink-0">
        <div class="area-head d-flex align-items-center"><span>输入、输出</span><button class="ms-auto" aria-label="图例"><svg width="14" height="14"><use href="#lst"/></svg></button></div>
        <div class="d-flex">
          <div class="view-l overflow-hidden"><table class="bits" id="tl"></table></div>
          <div class="vs d-flex flex-column"><div class="top-cell"></div>
            <button aria-label="向上"><svg width="9" height="9"><use href="#up"/></svg></button>
            <div class="thumb-v d-flex align-items-center justify-content-center" style="height:33%"><svg width="8" height="8"><use href="#grip-v"/></svg></div>
            <button class="mt-auto" aria-label="向下"><svg width="9" height="9"><use href="#dn"/></svg></button></div>
        </div>
        <div class="d-flex"><div class="c20" style="background:#cacaca"></div>
          <div class="hs d-flex flex-grow-1 me-3">
          <button aria-label="向左"><svg width="9" height="9"><use href="#lf"/></svg></button>
          <div class="thumb-h flex-grow-1 d-flex align-items-center justify-content-center me-1"><svg width="8" height="7"><use href="#grip-h"/></svg></div>
          <button aria-label="向右"><svg width="9" height="9"><use href="#rt"/></svg></button></div></div>
      </section>
      <section class="grid-r flex-shrink-0">
        <div class="area-head d-flex align-items-center"><span>位存储器</span></div>
        <div class="body-r overflow-hidden"><table class="bits" id="tr"></table></div>
      </section>
    </div>
    <div class="insp d-flex justify-content-end t12 flex-shrink-0">
      <button class="tabx"><svg width="13" height="13"><use href="#insp-p"/></svg>属性</button>
      <button class="tabx on fw-bold"><svg width="13" height="13"><use href="#insp-i"/></svg>信息<svg width="11" height="11" class="ms-auto me-1"><use href="#warn"/></svg></button>
      <button class="tabx"><svg width="13" height="13"><use href="#diag"/></svg>诊断</button>
      <div class="d-flex gap-1 align-items-center ms-3 me-1 pb-1">
        <button aria-label="还原"><svg width="11" height="11"><use href="#wres"/></svg></button>
        <button aria-label="最大化"><svg width="11" height="11"><use href="#wlist"/></svg></button>
        <button aria-label="展开"><svg width="12" height="11"><use href="#wtri"/></svg></button>
      </div>
    </div>
  </main>
  <div class="edge flex-shrink-0"></div>

  <aside class="side-strip right-strip flex-shrink-0 t12">
    <button class="col-arrow position-absolute" aria-label="展开任务卡"><svg width="8" height="10"><use href="#tri-l"/></svg></button>
    <button class="vtab on fw-bold" style="height:64px"><svg width="14" height="14"><use href="#task"/></svg><span class="vtext">任务</span></button>
    <button class="vtab" style="height:48px"><svg width="14" height="14"><use href="#book"/></svg><span class="vtext">库</span></button>
    <button class="vtab justify-content-center" style="height:51px"><span class="vtext">插件</span></button>
  </aside>
</div>

<footer class="foot flex-shrink-0 d-flex flex-column">
  <div class="d-flex flex-grow-1 align-items-start">
    <a href="#" class="portal-link d-flex align-items-center gap-2 t12 fw-semibold mt-1"><svg width="8" height="10"><use href="#tri-l"/></svg>Portal 视图</a>
    <button class="task t11"><svg class="ic"><use href="#over"/></svg>总览</button>
    <button class="task"><svg class="ic"><use href="#ob"/></svg>Main (OB1)</button>
    <button class="task t11"><svg class="ic"><use href="#db"/></svg>6个分拣箱到...</button>
    <button class="task t11"><svg class="ic"><use href="#db"/></svg>分拣箱定时...</button>
    <button class="task on t11 fw-bold"><svg class="ic"><use href="#pinfo"/></svg>程序信息</button>
    <div class="status ms-auto d-flex align-items-center t11">
      <svg width="16" height="17"><use href="#stat"/></svg>
      <svg width="12" height="12" class="info-mark"><use href="#inf"/></svg>
      <span class="msg">操作数'"Tag_84"'已成功修改。</span>
      <svg class="activity" width="24" height="11" viewBox="0 0 24 11"><path d="M1.500 0v11M4.500 0v11M7.500 0v11M10.500 0v11M13.500 0v11M19.500 0v11M22.500 0v11" stroke="#e84c14" stroke-width="2"/><path d="M16 0v11" stroke="#e8f0ff" stroke-width="2"/></svg>
    </div>
  </div>
  <div class="foot-line"></div>
</footer>

<div class="wm position-absolute" aria-hidden="true">
  <div class="zh d-flex"><span>西</span><span>门</span><span>子</span><span>工</span><span>业</span><span class="gap-before">找</span><span>答</span><span>案</span></div>
  <div class="url">support.industry.siemens.com/cs</div>
</div>

<script>
const svg=(id,w,h)=>`<svg width="${w}" height="${h||w}"><use href="#${id}"/></svg>`;
document.getElementById('menu').innerHTML=['项目(P)','编辑(E)','视图(V)','插入(I)','在线(O)','选项(N)','工具(T)','窗口(W)','帮助(H)'].map(t=>`<a href="#">${t}</a>`).join('');

// level, toggle, icon, label, flags: c = compared ok, d = online dot, h = shaded, s = selected, b = bold
const tree=[
[0,'d','page','通讯测试项目-数据列表','cdh'],[1,'','addblk','添加新设备',''],[1,'','net','设备和网络',''],
[1,'d','plc','PLC_1 [CPU 1215C DC/DC/DC]','cdhb'],[2,'','devcfg','设备组态',''],[2,'','diag','在线和诊断',''],
[2,'d','fblk','程序块','d'],[3,'','addblk','添加新块',''],[3,'','ob','Main [OB1]','d'],
[3,'','db','5个分拣箱数据列表 [DB50]','d'],[3,'','db','6个分拣箱到达时间 [DB48]','d'],[3,'','db','报警类常量 [DB31]','d'],
[3,'','db','触摸屏相关数据 [DB36]','ds'],[3,'','db','发送所扫描到的相机信息 [D...','d'],[3,'','db','分拣器定时器1个 [DB42]','d'],
[3,'','db','分拣器定时器2个 [DB88]','d'],[3,'','db','分拣箱定时器42个 [DB47]','d'],[3,'','db','各种常量 [DB4]','d'],
[3,'','db','接收财务系统分拣信息 [DB37]','d'],[3,'','db','接收相机扫描文档信息 [DB32]','d'],[3,'','db','数据块_1 [DB1]','d'],
[3,'','db','通讯用数据块 [DB40]','d'],[3,'','db','写入财务系统状态报告 [DB38]','d'],[3,'','db','在位判断 [DB53]','d'],
[3,'r','fsys','系统块','d'],[2,'r','ftech','工艺对象',''],[2,'r','fext','外部源文件',''],[2,'r','fvar','PLC 变量','d'],
[2,'r','ftype','PLC 数据类型','d'],[2,'r','fwatch','监控与强制表',''],[2,'r','fback','在线备份',''],[2,'r','ftrace','Traces',''],[2,'r','fopc','OPC UA 通信','']];
document.getElementById('tree').innerHTML=tree.map(([l,t,i,n,f])=>
`<div class="tree-row d-flex ${f.includes('h')?'head':''} ${f.includes('s')?'sel':''}" role="treeitem" aria-level="${l+1}">
<div class="name d-flex align-items-center lv-${l} ${f.includes('b')?'strong-text':''}"><span class="tog d-flex">${t?svg('tri-'+t,8):''}</span>${svg(i,14)}<span class="label-text">${n}</span></div>
<div class="chk d-flex align-items-center justify-content-center">${f.includes('c')?svg('ok',12):''}</div>
<div class="dot d-flex align-items-center justify-content-center">${f.includes('d')?svg('run',12):''}</div></div>`).join('');

const heads=['','地址','7','6','5','4','3','2','1','0','B','W','DWORD','LWORD',''];
function build(id,widths,rows,total,cur){
  let h='<colgroup>'+widths.map(w=>`<col class="c${w}">`).join('')+'</colgroup><thead><tr>'+
    heads.map((t,i)=>`<th class="${i==1?'ad':''} ${cur&&i==9?'cur':''}">${t}</th>`).join('')+'</tr></thead><tbody>';
  for(let r=0;r<total;r++){
    const [name='',bits='',opt={}]=rows[r]||[];
    h+=`<tr><td class="gut ${opt.pick?'cur':''}"></td><td class="ad"><div class="d-flex align-items-center justify-content-between">${name||'&nbsp;'}${opt.icon?svg(opt.icon,14,13):''}</div></td>`;
    for(let b=7;b>=0;b--) h+=`<td class="bitc ${opt.use?'use':''} ${opt.pick&&b==0?'pick':''}">${bits.includes(b)?svg('bit',9):''}</td>`;
    h+=`<td></td><td>${opt.use?'<div class="pill"></div>':''}</td><td></td><td></td><td></td></tr>`;
  }
  const t=document.getElementById(id);
  t.style.width=widths.reduce((a,b)=>a+b)+'px';
  t.innerHTML=h+'</tbody>';
}
const left=[['IB0','76543210'],['IB1','0'],['IB8','543210'],['IB12','7654321'],['IB16','320'],['IB64'],['IB65'],['IB66'],['IB67']];
for(let n=1000;n<1023;n++) left.push(['IB'+n]);
build('tl',[20,50,14,14,14,14,14,14,15,14,14,25,50,100,5],left,32);
build('tr',[20,54,14,14,14,14,14,14,14,15,14,25,50,100,20],[['MB0','7',{icon:'clk'}],['MB1','320',{icon:'sysb'}],['MB2','76543210',{use:1}],['MB3','3210',{use:1}],['MB4','54321'],['MB5','65'],['MB6','1'],['MB11','320'],['MB12','0'],['MB15','654321'],['MB16','10'],['MB17','543210'],['MB18','0'],['MB19','654321'],['MB20','10'],['MB44','54',{pick:1}]],34,true);
</script>
<script src="https://cdn.jsdelivr.net/npm/bootstrap@5.3.0/dist/js/bootstrap.bundle.min.js"></script>
</body>
</html>
